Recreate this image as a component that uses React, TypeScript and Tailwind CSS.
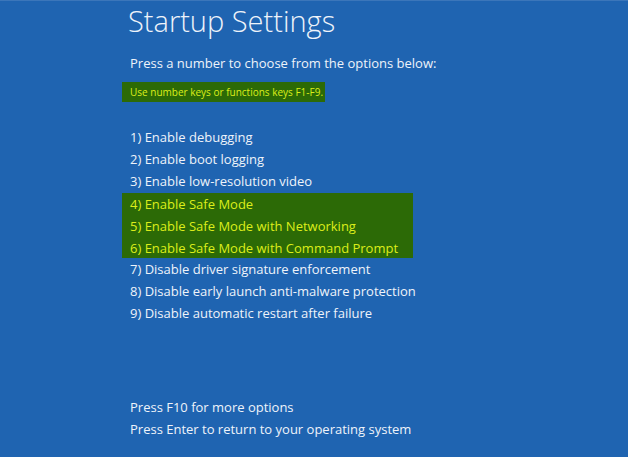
export default function App() {
  const top = [
    '1) Enable debugging',
    '2) Enable boot logging',
    '3) Enable low-resolution video',
  ]
  const safe = [
    '4) Enable Safe Mode',
    '5) Enable Safe Mode with Networking',
    '6) Enable Safe Mode with Command Prompt',
  ]
  const rest = [
    '7) Disable driver signature enforcement',
    '8) Disable early launch anti-malware protection',
    '9) Disable automatic restart after failure',
  ]

  return (
    <div
      className="w-[628px] h-[457px] bg-[#1f64b1] border-t border-[#3b76ba] text-[#eef3fa] overflow-hidden whitespace-nowrap"
      style={{ fontFamily: '"Open Sans", "Noto Sans", sans-serif' }}
    >
      <div className="pl-[122px] flex flex-col">
        <h1 className="pl-[6px] text-[29px] leading-[40px] font-light">Startup Settings</h1>
        <p className="pl-[8px] mt-[12px] text-[13px] leading-[20px]">
          Press a number to choose from the options below:
        </p>
        <div className="mt-[9px] self-start w-[203px] h-[20px] bg-[#2c6a06] pl-[8px] text-[#dcee1a] text-[10px] leading-[20px]">
          Use number keys or functions keys F1-F9.
        </div>
        <div className="mt-[24px] pl-[8px] text-[13px] leading-[22px]">
          {top.map((t) => (
            <div key={t}>{t}</div>
          ))}
        </div>
        {/* safe mode options are highlighted */}
        <div className="self-start w-[291px] mt-[1px] h-[65px] pl-[8px] bg-[#2c6a06] text-[#dcee1a] text-[13px] leading-[22px]">
          {safe.map((t) => (
            <div key={t}>{t}</div>
          ))}
        </div>
        <div className="pl-[8px] text-[13px] leading-[22px]">
          {rest.map((t) => (
            <div key={t}>{t}</div>
          ))}
        </div>
        <div className="mt-[72px] pl-[8px] text-[13px] leading-[22px]">
          <div>Press F10 for more options</div>
          <div>Press Enter to return to your operating system</div>
        </div>
      </div>
    </div>
  )
}
